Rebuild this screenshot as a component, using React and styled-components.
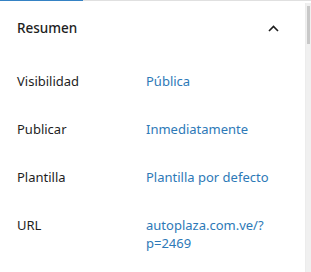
import styled, { createGlobalStyle } from "styled-components";

const GlobalStyle = createGlobalStyle`
  body {
    margin: 0;
    background: #fff;
    font-family: "Segoe UI", "Noto Sans", "Open Sans", sans-serif;
    color: #1e1e1e;
  }
`;

const Frame = styled.div`
  width: 311px;
  height: 272px;
  display: flex;
  flex-direction: column;
  overflow: hidden;
`;

const TabStrip = styled.div`
  display: flex;
  height: 1px;
  background: #e0e0e0;
`;

const ActiveTab = styled.div`
  width: 83px;
  background: #3582c4;
`;

const Body = styled.div`
  flex: 1;
  display: flex;
`;

const Panel = styled.div`
  flex: 1;
`;

const Scrollbar = styled.div`
  width: 5px;
  margin-top: 2px;
  background: #f0f0f0;
  border-left: 1px solid #ececec;
`;

const Thumb = styled.div`
  height: 38px;
  margin: 3px 0 0 1px;
  width: 3px;
  background: #c8c8c8;
`;

const Header = styled.div`
  height: 54px;
  display: flex;
  align-items: center;
  justify-content: space-between;
  padding: 0 26px 2px 17px;
`;

const Title = styled.h2`
  margin: 0;
  font-size: 13.5px;
  font-weight: 500;
  color: #1e1e1e;
`;

const Rows = styled.div`
  display: grid;
  grid-template-columns: 129px 1fr;
  row-gap: 30px;
  padding: 15px 16px 0 17px;
  font-size: 13px;
  line-height: 18px;
`;

const Label = styled.div`
  color: #1e1e1e;
`;

const Value = styled.a`
  color: #2d79b7;
  text-decoration: none;
  max-width: 130px;
  overflow-wrap: anywhere;
`;

const rows = [
  ["Visibilidad", "Pública"],
  ["Publicar", "Inmediatamente"],
  ["Plantilla", "Plantilla por defecto"],
  ["URL", "autoplaza.com.ve/?p=2469"],
];

export default function App() {
  return (
    <Frame>
      <GlobalStyle />
      <TabStrip>
        <ActiveTab />
      </TabStrip>
      <Body>
        <Panel>
          <Header>
            <Title>Resumen</Title>
            <svg width="11" height="7" viewBox="0 0 11 7">
              <path d="M1 6 L5.5 1.5 L10 6" fill="none" stroke="#1e1e1e" strokeWidth="1.6" />
            </svg>
          </Header>
          <Rows>
            {rows.map(([label, value]) => (
              <>
                <Label key={label}>{label}</Label>
                <Value href="#">{value}</Value>
              </>
            ))}
          </Rows>
        </Panel>
        <Scrollbar>
          <Thumb />
        </Scrollbar>
      </Body>
    </Frame>
  );
}
